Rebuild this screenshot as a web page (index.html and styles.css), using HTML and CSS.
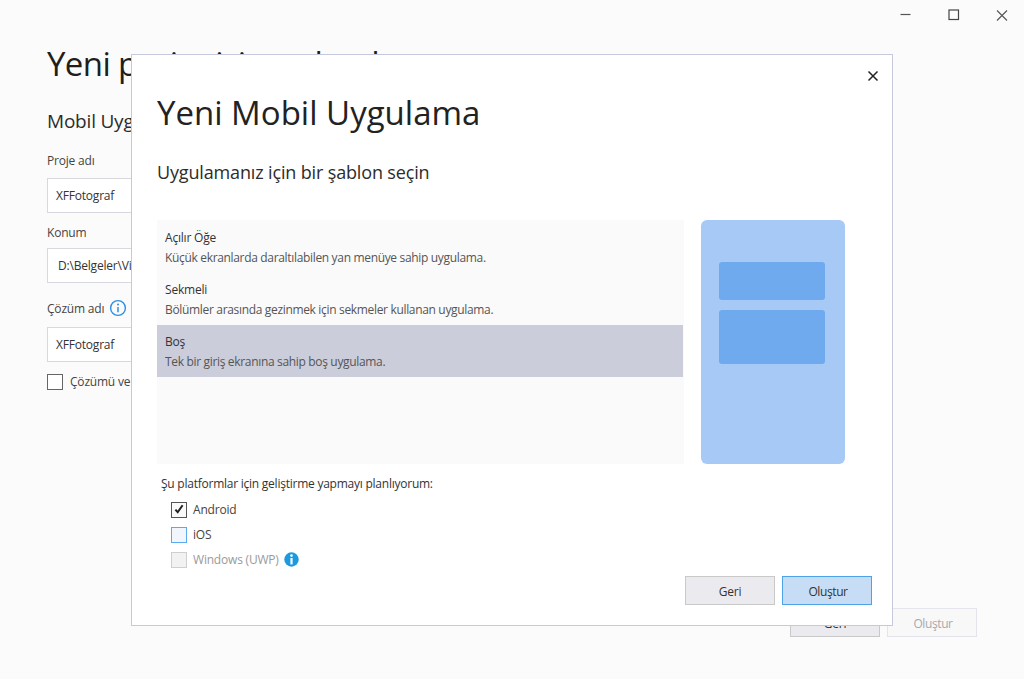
FILE: index.html
```html
<!DOCTYPE html>
<html lang="tr">
<head>
<meta charset="utf-8">
<title>Yeni Mobil Uygulama</title>
<link rel="stylesheet" href="styles.css">
</head>
<body>
<div class="window">
  <div class="controls">
    <svg class="ctl" width="16" height="16" viewBox="0 0 16 16"><path d="M2.5 7.5h10" stroke="#555" stroke-width="1.2"/></svg>
    <svg class="ctl" width="16" height="16" viewBox="0 0 16 16"><rect x="3" y="3" width="9.5" height="9.5" fill="none" stroke="#444" stroke-width="1.2"/></svg>
    <svg class="ctl" width="16" height="16" viewBox="0 0 16 16"><path d="M3 3.5l10 10M13 3.5L3 13.5" stroke="#555" stroke-width="1.1"/></svg>
  </div>
  <main class="page">
    <h1 class="page-title">Yeni projenizi yapılandırın</h1>
    <h2 class="page-sub">Mobil Uygulama</h2>
    <label class="field-label label-first">Proje adı</label>
    <div class="input input-first">XFFotograf</div>
    <label class="field-label">Konum</label>
    <div class="input input-path">D:\Belgeler\Visual Studio 2019\Projects</div>
    <label class="field-label label-info">Çözüm adı
      <svg class="info-o" width="18" height="18" viewBox="0 0 18 18"><circle cx="9" cy="9" r="7.4" fill="none" stroke="#2b8fe3" stroke-width="1.4"/><circle cx="9" cy="5.6" r="1" fill="#2b8fe3"/><path d="M9 8v5.2" stroke="#2b8fe3" stroke-width="1.5"/></svg>
    </label>
    <div class="input input-info">XFFotograf</div>
    <div class="check-row">
      <span class="box-lg"></span>
      <span>Çözümü ve projeyi aynı dizine yerleştir</span>
    </div>
  </main>
  <footer class="page-footer">
    <button class="btn">Geri</button>
    <button class="btn btn-disabled">Oluştur</button>
  </footer>
</div>

<section class="modal">
  <svg class="modal-close" width="12" height="12" viewBox="0 0 12 12"><path d="M1.5 1.5l9 9M10.5 1.5l-9 9" stroke="#222" stroke-width="1.5"/></svg>
  <h1 class="modal-title">Yeni Mobil Uygulama</h1>
  <h2 class="modal-sub">Uygulamanız için bir şablon seçin</h2>
  <div class="chooser">
    <div class="list">
      <div class="item"><div class="item-name">Açılır Öğe</div><div class="item-desc">Küçük ekranlarda daraltılabilen yan menüye sahip uygulama.</div></div>
      <div class="item"><div class="item-name">Sekmeli</div><div class="item-desc">Bölümler arasında gezinmek için sekmeler kullanan uygulama.</div></div>
      <div class="item item-selected"><div class="item-name">Boş</div><div class="item-desc">Tek bir giriş ekranına sahip boş uygulama.</div></div>
    </div>
    <div class="preview">
      <div class="pv-block pv-short"></div>
      <div class="pv-block pv-tall"></div>
    </div>
  </div>
  <div class="platform-label">Şu platformlar için geliştirme yapmayı planlıyorum:</div>
  <div class="platforms">
    <div class="plat"><span class="box box-checked"><svg width="12" height="12" viewBox="0 0 12 12"><path d="M2.4 5.6l2.3 2.6L9.6 1.2" fill="none" stroke="#222" stroke-width="2"/></svg></span><span>Android</span></div>
    <div class="plat"><span class="box box-blue"></span><span>iOS</span></div>
    <div class="plat plat-disabled"><span class="box box-off"></span><span>Windows (UWP)</span>
      <svg width="15" height="15" viewBox="0 0 15 15"><circle cx="7.5" cy="7.5" r="7.2" fill="#1b9ae0"/><circle cx="7.5" cy="3.6" r="1.3" fill="#fff"/><path d="M7.5 6v6.4" stroke="#fff" stroke-width="2.2"/></svg>
    </div>
  </div>
  <div class="modal-actions">
    <button class="btn">Geri</button>
    <button class="btn btn-primary">Oluştur</button>
  </div>
</section>
</body>
</html>
```
FILE: styles.css
```css
* { box-sizing: border-box; }
html, body { margin: 0; height: 100%; }
body {
  width: 1024px;
  height: 679px;
  overflow: hidden;
  position: relative;
  background: #fbfbfb;
  color: #222;
  font-family: "Open Sans", "Noto Sans", sans-serif;
  font-size: 12px;
}
h1, h2 { margin: 0; font-weight: 400; }

.window { height: 679px; display: flex; flex-direction: column; }
.controls { display: flex; justify-content: flex-end; gap: 32px; padding: 7px 14px 0 0; height: 24px; }
.page { padding: 18px 0 0 47px; flex: 1; }
.page-title { font-size: 33px; line-height: 44px; color: #1e1e1e; letter-spacing: -0.6px; white-space: nowrap; }
.page-sub { font-size: 19px; line-height: 24px; margin-top: 23px; color: #2c2c2c; letter-spacing: -0.2px; }
.field-label { display: flex; align-items: center; gap: 5px; height: 18px; margin-top: 10px; color: #444; letter-spacing: -0.2px; }
.label-first { margin-top: 18px; }
.label-info { margin-top: 16px; }
.input { width: 380px; height: 35px; margin-top: 7px; padding: 0 8px; display: flex; align-items: center; background: #fff; border: 1px solid #d8d8e0; color: #333; letter-spacing: -0.2px; white-space: nowrap; }
.input-first { margin-top: 9px; }
.input-info { margin-top: 10px; }
.input-path { padding-left: 10px; }
.check-row { display: flex; align-items: center; gap: 7px; margin-top: 11px; color: #444; letter-spacing: -0.2px; }
.box-lg { width: 16px; height: 16px; background: #fff; border: 1px solid #666; }
.page-footer { display: flex; justify-content: flex-end; gap: 7px; padding: 0 47px 42px 0; }

.btn { width: 90px; height: 29px; padding: 1px 0 0; background: #ebebef; border: 1px solid #c9c9c9; font: inherit; color: #333; letter-spacing: -0.2px; }
.btn-disabled { padding-left: 2px; background: #f8f8f9; border-color: #e4e4ec; color: #a9a9a9; letter-spacing: -0.4px; }
.btn-primary { padding-left: 2px; background: #c7dcf5; border: 1px solid #4da3e8; letter-spacing: -0.4px; }

.modal {
  position: absolute;
  left: 131px;
  top: 54px;
  width: 762px;
  height: 572px;
  padding: 36px 47px 0 25px;
  background: #fff;
  border: 1px solid #c6c8dc;
}
.modal-close { position: absolute; top: 15px; right: 13px; }
.modal-title { font-size: 33px; line-height: 44px; color: #222; letter-spacing: 0; }
.modal-sub { font-size: 18px; line-height: 24px; margin-top: 25px; color: #2c2c2c; letter-spacing: -0.15px; }
.chooser { display: flex; gap: 17px; margin-top: 36px; height: 244px; }
.list { width: 527px; background: #fafafa; padding-top: 1px; }
.item { height: 52px; padding: 8px 8px 0; margin-right: 1px; }
.item-selected { background: #cbcdda; }
.item-name { line-height: 18px; color: #333; letter-spacing: -0.2px; }
.item-desc { line-height: 18px; margin-top: 2px; color: #555; letter-spacing: -0.33px; }
.preview { width: 144px; padding: 42px 20px 0 18px; display: flex; flex-direction: column; gap: 10px; background: #a6c9f6; border-radius: 6px; }
.pv-block { background: #6faaef; border-radius: 3px; }
.pv-short { height: 38px; }
.pv-tall { height: 54px; }

.platform-label { margin: 11px 0 0 4px; line-height: 18px; color: #333; letter-spacing: -0.24px; }
.platforms { margin: 8px 0 0 14px; display: flex; flex-direction: column; gap: 8px; }
.plat { display: flex; align-items: center; gap: 5px; height: 17px; color: #444; letter-spacing: -0.2px; }
.box { width: 16px; height: 16px; margin-right: 1px; display: flex; align-items: center; justify-content: center; }
.box-checked { background: #fafafa; border: 1px solid #555; }
.box-blue { background: #f1f6fd; border: 1px solid #5aaaf0; }
.box-off { background: #f2f2f2; border: 1px solid #cfcfcf; }
.plat-disabled { color: #9a9a9a; }
.modal-actions { position: absolute; right: 20px; bottom: 20px; display: flex; gap: 7px; }
```
